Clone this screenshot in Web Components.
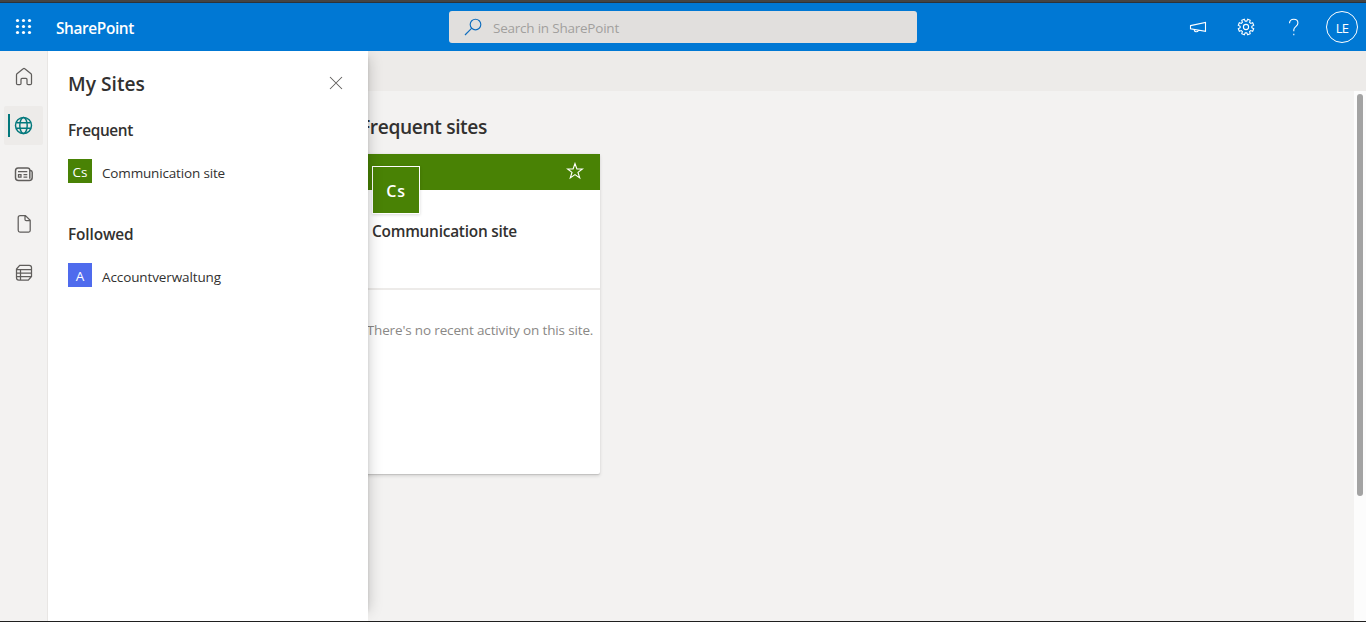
<!DOCTYPE html>
<html lang="en">
<head>
<meta charset="utf-8">
<title>SharePoint</title>
<style>
html,body{margin:0;height:100%;overflow:hidden}
body{font-family:"Open Sans","Noto Sans",sans-serif;color:#323130;font-size:14px}
</style>
</head>
<body>
<sp-app></sp-app>
<script>
const define=(name,html,ready)=>customElements.define(name,class extends HTMLElement{
  constructor(){super();this.attachShadow({mode:'open'}).innerHTML=html;}
  connectedCallback(){if(ready)ready(this,this.shadowRoot);}
});

/* A single-line label whose tracking is adjusted to occupy the given width. */
define('fit-label',`<style>:host{display:inline-block;white-space:nowrap;line-height:20px}span{display:inline-block}</style><span><slot></slot></span>`,(el,r)=>{
  const s=r.querySelector('span'),w=parseFloat(el.getAttribute('width'));
  const n=el.textContent.length,natural=s.getBoundingClientRect().width;
  if(w&&natural)s.style.letterSpacing=((w-natural)/n).toFixed(3)+'px';
});

const icons={
home:'<path d="M5 8.8 11.2 3.7q.8-.7 1.6 0L19 8.8q.5.5.5 1.2v8.5q0 1.2-1.2 1.2h-2.1q-1.2 0-1.2-1.2v-4.1q0-1-1-1h-4q-1 0-1 1v4.1q0 1.2-1.2 1.2H5.7q-1.2 0-1.2-1.2V10q0-.7.5-1.2Z"/>',
globe:'<g stroke-width="1.45"><circle cx="11.5" cy="11.5" r="8"/><ellipse cx="11.5" cy="11.5" rx="3.7" ry="8"/><path d="M4.2 8.7h14.6M4.2 14.3h14.6"/></g>',
news:'<path stroke-width="1.45" d="M17.8 7.2h.4q2 .3 2 2v5.3q0 3-3 3H6.5q-3 0-3-3V7.9Q3.5 5 6.1 5h9.2q2.5 0 2.5 2.2v8.5"/><path d="M6 8.5h9.3M11.5 11.5h3.8M11.5 14.2h3.8M6.5 11.5h2.5v2.7H6.5z"/>',
file:'<path d="M8.2 3.5h5.2l4.8 4.8v10.3q0 1.5-1.5 1.5H8q-1.8 0-1.8-1.8V5.5q0-2 2-2ZM13 3.5v4q0 1.2 1.2 1.2h4"/>',
list:'<path d="M7.7 4.3h9.5q2.3 0 2.3 2.3v8.8l-3.2 3.7H6.8q-2.3 0-2.3-2.3V8ZM4.5 8.5h15M4.5 12h15M4.5 15.5h14.8M8.5 8.5v10.6"/>',
};
define('sp-rail-item',`<style>
:host{display:flex;box-sizing:border-box;width:39px;height:39px;margin-left:4px;border-radius:2px;align-items:center;padding-left:4px;color:#605e5c}
i{width:2px;height:23px;background:transparent;margin-right:2px}
svg{width:24px;height:24px;fill:none;stroke:currentColor;stroke-width:1.25}
:host([active]){background:#edebe9;color:#03787c}:host([active]) i{background:#03787c}
</style><i></i><svg viewBox="0 0 24 24"></svg>`,(el,r)=>{r.querySelector('svg').innerHTML=icons[el.getAttribute('icon')];});

define('sp-rail',`<style>
:host{display:flex;flex-direction:column;box-sizing:border-box;width:48px;flex:none;padding-top:6px;gap:10.2px;background:#f3f2f1;border-right:1px solid #e8e6e4}
</style><sp-rail-item icon="home"></sp-rail-item><sp-rail-item icon="globe" active></sp-rail-item><sp-rail-item icon="news"></sp-rail-item><sp-rail-item icon="file"></sp-rail-item><sp-rail-item icon="list"></sp-rail-item>`);

define('sp-search',`<style>
:host{display:flex;align-items:center;box-sizing:border-box;width:468px;height:32px;background:#e1dfdd;border-radius:3px;padding-left:15px;color:#a19f9d;font-size:13.5px}
svg{width:18px;height:18px;fill:none;stroke:#106ebe;stroke-width:1.15;margin-right:11px;flex:none}
fit-label{padding-top:2px}
</style><svg viewBox="0 0 18 18"><circle cx="11.5" cy="6.5" r="5.3"/><path d="M7.8 10.2 1 17"/></svg><fit-label width="126">Search in SharePoint</fit-label>`);

define('sp-header',`<style>
:host{display:grid;grid-template-columns:449px 468px 1fr;align-items:center;box-sizing:border-box;height:51px;flex:none;background:#0078d4;color:#fff;border-top:2px solid #444}
:host{box-shadow:inset 0 1px #2c333a}
.brand{display:flex;align-items:center;padding:2px 0 0 15px}
.brand svg{width:18px;height:18px;margin:-2px 23px 0 0;fill:#fff}
.brand fit-label{font-weight:600;font-size:15.4px;padding-top:3px}
sp-search{margin-top:1px}
.tools{display:flex;align-items:center;justify-content:flex-end;padding-right:8px;margin-top:1px}
.tools svg{fill:none;stroke:#fff;stroke-width:1.1;flex:none}
.avatar{box-sizing:border-box;width:32px;height:32px;border:1px solid #fff;border-radius:50%;display:flex;align-items:center;justify-content:center;font-size:13px;padding-top:2px;margin-left:23px}
</style>
<div class="brand"><svg viewBox="0 0 18 18"><circle cx="2.5" cy="2.5" r="1.6"/><circle cx="8.5" cy="2.5" r="1.6"/><circle cx="14.5" cy="2.5" r="1.6"/><circle cx="2.5" cy="8.5" r="1.6"/><circle cx="8.5" cy="8.5" r="1.6"/><circle cx="14.5" cy="8.5" r="1.6"/><circle cx="2.5" cy="14.5" r="1.6"/><circle cx="8.5" cy="14.5" r="1.6"/><circle cx="14.5" cy="14.5" r="1.6"/></svg><fit-label width="78">SharePoint</fit-label></div>
<sp-search></sp-search>
<div class="tools">
<svg width="18" height="18" viewBox="0 0 18 18" style="margin-right:30px"><path d="M1.5 7.6 16.5 4.4v9L1.5 10.8ZM5 11.5q.3 2.2 2.2 2.2 1.6 0 2.2-1.3"/></svg>
<svg width="18" height="18" viewBox="0 0 18 18" style="margin-right:30px"><circle cx="9" cy="9" r="2.6"/><path id="gear"/></svg>
<svg width="18" height="18" viewBox="0 0 18 18"><path d="M4.5 5.3Q4.7 1.3 8.8 1.3q4.1 0 4.1 3.7 0 1.8-1.9 3.4-2.2 1.9-2.2 3.4v1.5M8.8 15.8v1.4"/></svg>
<div class="avatar"><fit-label width="12.5">LE</fit-label></div>
</div>`,(el,r)=>{
  const pts=[];
  for(let k=0;k<8;k++)for(const [d,q] of [[-15,5.9],[-10,7.9],[10,7.9],[15,5.9]]){
    const a=(k*45+22.5+d)*Math.PI/180;pts.push((9+q*Math.cos(a)).toFixed(2)+' '+(9+q*Math.sin(a)).toFixed(2));
  }
  r.querySelector('#gear').setAttribute('d','M'+pts.join('L')+'Z');
});

define('sp-site-link',`<style>
:host{display:flex;height:24px}
.tile{width:24px;height:24px;display:flex;align-items:center;justify-content:center;color:#fff;background:var(--tile);font-size:13.5px;margin-right:10px;line-height:24px;padding-top:2px;box-sizing:border-box}
slot{display:block}
.name{padding-top:4px;font-size:13.5px}
</style><div class="tile"><slot name="tile"></slot></div><div class="name"><slot></slot></div>`);

define('sp-panel',`<style>
:host{display:block;box-sizing:border-box;background:#fff;padding:0 20px}
header{display:flex;justify-content:space-between;height:66px;padding-top:23px;box-sizing:border-box}
header fit-label{font-size:19.2px;font-weight:600}
svg{width:14px;height:14px;margin:2px 5px 0;stroke:#605e5c;fill:none;stroke-width:1.05}
h3{margin:0 0 18px;height:24px;padding-top:3px;font-size:15.4px;font-weight:600;box-sizing:border-box}
sp-site-link{margin-bottom:38px}
</style>
<header><fit-label width="77">My Sites</fit-label><svg viewBox="0 0 14 14"><path d="M1 1 13 13M13 1 1 13"/></svg></header>
<h3><fit-label width="65">Frequent</fit-label></h3>
<sp-site-link style="--tile:#498205"><fit-label slot="tile" width="15">Cs</fit-label><fit-label width="123">Communication site</fit-label></sp-site-link>
<h3><fit-label width="65.5">Followed</fit-label></h3>
<sp-site-link style="--tile:#4f6bed"><span slot="tile">A</span><fit-label width="119">Accountverwaltung</fit-label></sp-site-link>`);

define('sp-card',`<style>
:host{display:flex;flex-direction:column;width:240px;height:320px;background:#fff;border-radius:2px;box-shadow:0 1.6px 3.6px rgba(0,0,0,.13),0 .3px .9px rgba(0,0,0,.11)}
.top{height:36px;box-sizing:border-box;background:#498205;display:flex;justify-content:space-between;padding:12px 16px 0 12px}
.logo{box-sizing:border-box;width:48px;height:48px;border:1px solid #fff;background:#498205;color:#fff;display:flex;align-items:center;justify-content:center;font-weight:600;font-size:16px;box-shadow:0 1px 3px rgba(0,0,0,.15);padding-top:2px;flex:none}
svg{width:18px;height:18px;fill:none;stroke:#fff;stroke-width:1.15;margin-top:-4px}
.info{box-sizing:border-box;height:100px;padding:31px 12px 0;border-bottom:2px solid #edebe9;font-size:15.4px;font-weight:600}
.activity{padding-top:30px;text-align:center;color:#8a8886;font-size:13.5px}
</style>
<div class="top"><div class="logo"><fit-label width="19.5">Cs</fit-label></div><svg viewBox="0 0 18 18"><path d="M9 1.6 10.9 7H16.4L12 10.4 13.7 15.9 9 12.6 4.3 15.9 6 10.4 1.6 7H7.1Z"/></svg></div>
<div class="info"><fit-label width="145">Communication site</fit-label></div>
<div class="activity"><fit-label width="226.5">There's no recent activity on this site.</fit-label></div>`);

define('sp-main',`<style>
:host{display:flex;flex-direction:column;flex:1;background:#f3f2f1}
.band{height:40px;background:#edebe9;flex:none}
.scroll{flex:1;display:flex}
.content{flex:1;padding:26px 0 0 312px}
h2{margin:0 0 17px;height:20px;line-height:20px;font-size:19.2px;font-weight:600}
h2 fit-label{display:block}
.bar{box-sizing:border-box;width:12px;background:#fcfcfc;padding:3px 3px 0}
.thumb{height:402px;border-radius:3px;background:#a3a3a3}
</style><div class="band"></div><div class="scroll"><div class="content"><h2><fit-label width="127">Frequent sites</fit-label></h2><sp-card></sp-card></div><div class="bar"><div class="thumb"></div></div></div>`);

/* The flyout floats over the main content, below the header; its shadow falls to the right only. */
define('sp-app',`<style>
:host{display:flex;flex-direction:column;height:100vh;box-sizing:border-box;border-bottom:1px solid #1f1f1f}
.body{flex:1;display:flex;position:relative;min-height:0;overflow:hidden}
.flyout{position:absolute;left:48px;top:0;bottom:0;width:344px;display:grid;grid-template-columns:320px;overflow:hidden;pointer-events:none}
.flyout::before{content:"";grid-area:1/1;margin:6px 0 10px;box-shadow:0 0 14px rgba(0,0,0,.22),0 0 3px rgba(0,0,0,.12)}
sp-panel{grid-area:1/1;position:relative;pointer-events:auto}
</style><sp-header></sp-header><div class="body"><sp-rail></sp-rail><sp-main></sp-main><div class="flyout"><sp-panel></sp-panel></div></div>`);
</script>
</body>
</html>
